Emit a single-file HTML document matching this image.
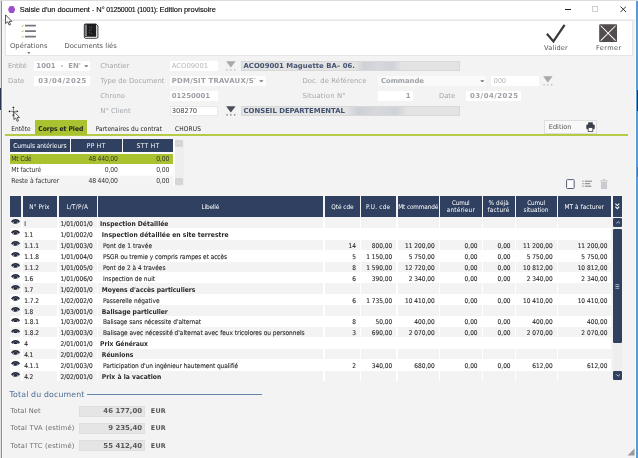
<!DOCTYPE html>
<html><head><meta charset="utf-8"><title>Saisie d'un document</title>
<style>
html,body{margin:0;padding:0;}
body{width:638px;height:458px;overflow:hidden;position:relative;background:#f3f3f3;font-family:"DejaVu Sans","Liberation Sans",sans-serif;font-size:7px;color:#333;}
.a{position:absolute;white-space:nowrap;line-height:1;}
.x{position:absolute;white-space:nowrap;line-height:12px;height:12px;}
.ti{font-family:"Liberation Sans",sans-serif;font-size:7.5px;color:#0a0a0a;-webkit-text-stroke:0.12px #0a0a0a;}
.tb{font-size:6.8px;color:#555;}
.lbl{color:#a3a7ab;font-size:6.85px;}
.fb{font-size:6.9px;font-weight:bold;color:#9da1a6;}
.fn{font-size:6.8px;color:#b5b8bb;}
.fg{font-size:6.9px;font-weight:bold;color:#43536f;}
.tab{font-family:"DejaVu Sans Condensed","Liberation Sans",sans-serif;font-size:6.5px;color:#1c1c1c;}
.h{font-family:"DejaVu Sans Condensed","Liberation Sans",sans-serif;font-size:6.4px;color:#fff;}
.c{font-family:"DejaVu Sans Condensed","Liberation Sans",sans-serif;font-size:6.5px;color:#282828;-webkit-text-stroke:0.1px #282828;}
.cb{font-family:"DejaVu Sans Condensed","Liberation Sans",sans-serif;font-size:6.7px;font-weight:bold;color:#2a2a2a;}
.s{font-family:"DejaVu Sans Condensed","Liberation Sans",sans-serif;font-size:6.8px;color:#333;}
.tt{font-size:7.8px;color:#4a6a94;}
.tl{font-size:6.7px;color:#6a6a6a;}
.tv{font-size:6.9px;font-weight:bold;color:#5a5a5a;}
.box{position:absolute;box-sizing:border-box;}
.hd{position:absolute;background:#2f4060;}
</style></head><body><div id="w" style="position:absolute;left:0;top:0;width:638px;height:458px;will-change:transform">

<div class="a" style="left:0;top:0;width:638px;height:1px;background:#dcdcdc"></div>
<div class="a" style="left:2px;top:1px;width:634px;height:19px;background:#fff"></div>
<div class="a" style="left:0px;top:1px;width:1px;height:457px;background:#e2e2e2"></div>
<div class="a" style="left:2px;top:20px;width:1px;height:438px;background:#fafafa"></div>
<div class="a" style="left:635px;top:20px;width:1px;height:438px;background:#fbfbfb"></div>
<div class="a" style="left:1px;top:1px;width:1px;height:457px;background:#5b9bd5"></div>
<div class="a" style="left:636.3px;top:1px;width:1.7px;height:457px;background:#5b9bd5"></div>
<svg class="a" style="left:7.9px;top:5.6px" width="7.3" height="7.2" viewBox="0 0 6.4 7" preserveAspectRatio="none"><polygon points="1.7,0.3 4.7,0.3 6.2,3.5 4.7,6.7 1.7,6.7 0.2,3.5" fill="#9b4fc4" stroke="#9b4fc4" stroke-width="0.5" stroke-linejoin="round"/></svg>
<span id="t1" class="x ti" style="left:19.8px;top:3.60px;letter-spacing:-0.071px;">Saisie d'un document - N° </span>
<span id="t2" class="x ti" style="left:106.3px;top:3.60px;letter-spacing:-0.249px;font-size:7px">01250001 (1001): </span>
<span id="t3" class="x ti" style="left:159.6px;top:3.60px;letter-spacing:-0.074px;">Edition provisoire</span>
<div class="a" style="left:564.5px;top:9px;width:6.2px;height:1px;background:#222"></div>
<div class="a" style="left:591.9px;top:6.2px;width:6px;height:6px;border:0.8px solid #cfcfcf;box-sizing:border-box"></div>
<svg class="a" style="left:619.5px;top:6px" width="6.6" height="6.6" viewBox="0 0 7 7"><path d="M0.5,0.5L6.5,6.5M6.5,0.5L0.5,6.5" stroke="#222" stroke-width="1"/></svg>
<div class="a" style="left:2px;top:19.4px;width:634px;height:2px;background:#f3f3f3"></div>
<div class="box" style="left:5px;top:19.6px;width:627.6px;height:36px;background:#fff;border:1px solid #e6e6e6"></div>
<svg class="a" style="left:21.4px;top:24.1px" width="17" height="15" viewBox="0 0 17 15"><g stroke="#74787e" stroke-width="1.8"><path d="M4,1.6H14.9M4,7.1H14.9M4,12.6H14.9"/></g><g stroke="#9ab92e" stroke-width="0.8" fill="none"><path d="M0.6,1.8L1.3,2.5L2.6,0.9M0.6,7.3L1.3,8L2.6,6.4M0.6,12.8L1.3,13.5L2.6,11.9"/></g></svg>
<span id="t4" class="x tb" style="left:10px;top:39.70px;letter-spacing:0.013px;">Opérations</span>
<svg class="a" style="left:26.9px;top:52px" width="3.8" height="2.1" viewBox="0 0 5 3"><path d="M0.5,0.3L4.5,0.3L2.5,2.7Z" fill="#444"/></svg>
<svg class="a" style="left:83px;top:23px" width="16" height="16" viewBox="83 23 16 16"><path d="M85.5,24.2H96.2L97.9,26V37Q97.9,38.3 96.6,38.3H85.8Q84.3,38.3 84.3,36.8V25.4Q84.3,24.2 85.5,24.2Z" fill="#fff" stroke="#2a2a2a" stroke-width="0.9"/><path d="M85.3,23.8H96.2V36.7H85.3Q84,36.7 84,35.4V25.1Q84,23.8 85.3,23.8Z" fill="#1d1d1f"/><rect x="84.6" y="24.6" width="2.3" height="11.4" fill="#8c8c90"/><path d="M84.6,26.2H86.9M84.6,28.2H86.9M84.6,30.2H86.9M84.6,32.2H86.9M84.6,34.2H86.9" stroke="#5a5a60" stroke-width="0.5"/><g fill="#8a8f9c"><rect x="89.3" y="26.8" width="0.8" height="0.8"/><rect x="91.3" y="26.8" width="0.8" height="0.8"/><rect x="90.6" y="28.9" width="0.8" height="0.8"/><rect x="89.3" y="30.3" width="0.8" height="0.8"/><rect x="89.3" y="32.2" width="0.8" height="0.8"/><rect x="90.9" y="33" width="0.8" height="0.8"/></g></svg>
<span id="t5" class="x tb" style="left:64.5px;top:39.70px;letter-spacing:-0.016px;">Documents liés</span>
<svg class="a" style="left:545px;top:22px" width="22" height="23" viewBox="545 22 22 23"><path d="M546.9,33.7L553.4,41.4L564.6,24.8" stroke="#3a3838" stroke-width="2.2" fill="none"/></svg>
<span id="t6" class="x tb" style="left:544px;top:41.50px;letter-spacing:0.192px;font-size:6.6px">Valider</span>
<svg class="a" style="left:599.1px;top:24.1px" width="18.3" height="18.3" viewBox="0 0 19 19"><rect x="0.2" y="0.2" width="18.6" height="18.6" rx="1.3" fill="#524c4c"/><path d="M1.8,1.8L17.2,17.2M17.2,1.8L1.8,17.2" stroke="#fff" stroke-width="1.05"/></svg>
<span id="t7" class="x tb" style="left:596px;top:41.50px;letter-spacing:0.370px;font-size:6.6px">Fermer</span>
<span id="t8" class="x lbl" style="left:8px;top:59.50px;letter-spacing:-0.307px;">Entité</span>
<div class="box" style="left:33.7px;top:60.5px;width:56.5px;height:10px;background:#fff;"></div>
<span id="t9" class="x fb" style="left:36.3px;top:59.50px;letter-spacing:0.040px;">1001&nbsp; -&nbsp; EN'</span>
<svg class="a" style="left:83.7px;top:64.5px" width="4.6" height="2.8" viewBox="0 0 4.6 2.8"><path d="M0.2,0.2L4.4,0.2L2.3,2.6Z" fill="#70747a"/></svg>
<span id="t10" class="x lbl" style="left:100.3px;top:59.50px;letter-spacing:-0.033px;">Chantier</span>
<div class="box" style="left:169.5px;top:60.5px;width:48.7px;height:10px;background:#fff;"></div>
<span id="t11" class="x fn" style="left:171.8px;top:59.50px;letter-spacing:0.006px;">ACO09001</span>
<svg class="a" style="left:225.6px;top:60.8px" width="10" height="10" viewBox="0 0 10 10"><path d="M0.1,0.2H9.6L4.85,6.5Z" fill="#a6a8ab"/><path d="M0.5,8.9H1.6M4.3,8.9H5.4M8.2,8.9H9.3" stroke="#a6a8ab" stroke-width="1.1"/></svg>
<div class="box" style="left:241px;top:60.5px;width:219px;height:10px;background:#e3e3e3;border:1px solid #d8d8d8;"></div>
<span id="t12" class="x fg" style="left:243.5px;top:59.50px;letter-spacing:0.022px;">ACO09001 Maguette BA– 06.</span>
<span id="t13" class="x lbl" style="left:8px;top:74.70px;letter-spacing:-0.015px;">Date</span>
<div class="box" style="left:33.7px;top:75.7px;width:56.5px;height:10px;background:#fff;"></div>
<span id="t14" class="x fb" style="left:38.3px;top:74.70px;letter-spacing:0.511px;">03/04/2025</span>
<span id="t15" class="x lbl" style="left:100.3px;top:74.70px;letter-spacing:0.007px;">Type de Document</span>
<div class="box" style="left:169.5px;top:75.7px;width:96px;height:10px;background:#fcfcfc;"></div>
<span id="t16" class="x fb" style="left:171.8px;top:74.70px;letter-spacing:0.242px;">PDM/SIT TRAVAUX/S&#8242;</span>
<svg class="a" style="left:259px;top:79.7px" width="4.6" height="2.8" viewBox="0 0 4.6 2.8"><path d="M0.2,0.2L4.4,0.2L2.3,2.6Z" fill="#70747a"/></svg>
<span id="t17" class="x lbl" style="left:302.4px;top:74.70px;letter-spacing:0.078px;">Doc. de Référence</span>
<div class="box" style="left:378.2px;top:75.7px;width:107.8px;height:10px;background:#fafafa;"></div>
<span id="t18" class="x fb" style="left:381px;top:74.70px;letter-spacing:-0.039px;">Commande</span>
<svg class="a" style="left:479.5px;top:79.7px" width="4.6" height="2.8" viewBox="0 0 4.6 2.8"><path d="M0.2,0.2L4.4,0.2L2.3,2.6Z" fill="#70747a"/></svg>
<div class="box" style="left:490.5px;top:75.7px;width:48.5px;height:10px;background:#fff;"></div>
<span id="t19" class="x fn" style="left:493.5px;top:74.70px;letter-spacing:-0.161px;">000</span>
<svg class="a" style="left:543.2px;top:75.5px" width="10" height="10" viewBox="0 0 10 10"><path d="M0.1,0.2H9.6L4.85,6.5Z" fill="#a6a8ab"/><path d="M0.5,8.9H1.6M4.3,8.9H5.4M8.2,8.9H9.3" stroke="#a6a8ab" stroke-width="1.1"/></svg>
<span id="t20" class="x lbl" style="left:100.3px;top:89.80px;letter-spacing:0.033px;">Chrono</span>
<div class="box" style="left:169.5px;top:90.8px;width:48.7px;height:10px;background:#fff;"></div>
<span id="t21" class="x fb" style="left:171.8px;top:89.80px;letter-spacing:-0.007px;">01250001</span>
<span id="t22" class="x lbl" style="left:302.4px;top:89.80px;letter-spacing:0.192px;">Situation N°</span>
<div class="box" style="left:378.2px;top:90.8px;width:35.2px;height:10px;background:#fff;"></div>
<span id="t23" class="x fb" style="right:227.80px;top:89.80px;letter-spacing:-0.297px;">1</span>
<span id="t24" class="x lbl" style="left:439px;top:89.80px;letter-spacing:-0.090px;">Date</span>
<div class="box" style="left:466px;top:90.8px;width:55.2px;height:10px;background:#fff;"></div>
<span id="t25" class="x fb" style="left:470px;top:89.80px;letter-spacing:0.511px;">03/04/2025</span>
<span id="t26" class="x lbl" style="left:100.3px;top:104.70px;letter-spacing:-0.026px;">N° Client</span>
<div class="box" style="left:169.5px;top:105.7px;width:48.7px;height:10px;background:#fff;border:1px solid #e9e9e9;"></div>
<span id="t27" class="x fn" style="left:171.8px;top:104.70px;letter-spacing:-0.109px;color:#4a4a4a">308270</span>
<svg class="a" style="left:225.7px;top:106.2px" width="10" height="10" viewBox="0 0 10 10"><path d="M0.1,0.2H9.6L4.85,6.5Z" fill="#4a4e58"/><path d="M0.5,8.9H1.6M4.3,8.9H5.4M8.2,8.9H9.3" stroke="#4a4e58" stroke-width="1.1"/></svg>
<div class="box" style="left:241px;top:105.7px;width:219px;height:10px;background:#e3e3e3;border:1px solid #d8d8d8;"></div>
<span id="t28" class="x fg" style="left:243.5px;top:104.70px;letter-spacing:-0.001px;">CONSEIL DEPARTEMENTAL</span>
<div class="a" style="left:356px;top:62px;width:45px;height:7.5px;background:linear-gradient(90deg,#e2e2e2,#cdd0d6 18%,#d6d8dc 50%,#cfd2d7 82%,#e2e2e2)"></div>
<div class="a" style="left:347px;top:107px;width:60px;height:7.5px;background:linear-gradient(90deg,#e2e2e2,#cdd0d6 18%,#d6d8dc 50%,#cfd2d7 82%,#e2e2e2)"></div>
<div class="a" style="left:5px;top:134.15px;width:623.3px;height:1.4px;background:#b5cb48"></div>
<div class="a" style="left:35px;top:120.4px;width:51.8px;height:14.3px;background:#a9c22f"></div>
<span id="t29" class="x tab" style="left:11.3px;top:122.90px;letter-spacing:0.035px;">Entête</span>
<span id="t30" class="x tab" style="left:38.3px;top:122.90px;letter-spacing:-0.040px;font-weight:bold;color:#222;font-size:6.7px">Corps et Pied</span>
<span id="t31" class="x tab" style="left:95.7px;top:122.90px;letter-spacing:0.053px;">Partenaires du contrat</span>
<span id="t32" class="x tab" style="left:175px;top:122.90px;letter-spacing:0.141px;">CHORUS</span>
<div class="box" style="left:544px;top:120px;width:52.5px;height:13.5px;background:#f8f8f8;border:1px solid #dedede"></div>
<span id="t33" class="x tb" style="left:548.8px;top:121.20px;letter-spacing:-0.018px;font-size:6.6px">Edition</span>
<svg class="a" style="left:585.8px;top:122px" width="9" height="10" viewBox="0 0 9 10"><rect x="2.2" y="0.3" width="4.6" height="3" fill="#3a3f4a"/><rect x="0.3" y="2.6" width="8.4" height="4.6" rx="1" fill="#3a3f4a"/><rect x="2.2" y="5.6" width="4.6" height="3.8" fill="#fff" stroke="#3a3f4a" stroke-width="0.8"/></svg>
<div class="a" style="left:10px;top:139.2px;width:164.5px;height:47.3px;background:#fbfbfb"></div>
<div class="hd" style="left:10.3px;top:139.4px;width:59.40px;height:12.9px"></div>
<div class="hd" style="left:71.2px;top:139.4px;width:50.40px;height:12.9px"></div>
<div class="hd" style="left:123.2px;top:139.4px;width:50.00px;height:12.9px"></div>
<span id="t34" class="x h" style="left:13.2px;top:140.20px;letter-spacing:-0.069px;font-size:6.6px">Cumuls antérieurs</span>
<span id="t35" class="x h" style="left:86.7px;top:140.20px;letter-spacing:0.375px;font-size:6.6px">PP HT</span>
<span id="t36" class="x h" style="left:136.5px;top:140.20px;letter-spacing:0.354px;font-size:6.6px">STT HT</span>
<div class="a" style="left:174.5px;top:139.2px;width:9.4px;height:47.3px;background:#eeeeee"></div>
<div class="a" style="left:175.3px;top:139.8px;width:7.7px;height:7.7px;background:#d5d5d5;border-radius:1px"></div>
<div class="a" style="left:175.3px;top:177.6px;width:7.7px;height:7.7px;background:#d5d5d5;border-radius:1px"></div>
<svg class="a" style="left:177.4px;top:142.3px" width="3.6" height="2.4" viewBox="0 0 4.6 3"><path d="M0.4,2.5L2.3,0.7L4.2,2.5" stroke="#e8e8e8" stroke-width="0.9" fill="none"/></svg>
<svg class="a" style="left:177.4px;top:180.5px" width="3.6" height="2.4" viewBox="0 0 4.6 3"><path d="M0.4,0.5L2.3,2.3L4.2,0.5" stroke="#e8e8e8" stroke-width="0.9" fill="none"/></svg>
<div class="a" style="left:10.3px;top:153.7px;width:162.9px;height:10px;background:#a9c22f"></div>
<span id="t37" class="x s" style="left:11.3px;top:152.90px;letter-spacing:-0.258px;">Mt Cdé</span>
<span id="t38" class="x s" style="right:520.31px;top:152.90px;letter-spacing:-0.214px;">48 440,00</span>
<span id="t39" class="x s" style="right:468.86px;top:152.90px;letter-spacing:-0.156px;">0,00</span>
<div class="a" style="left:10.3px;top:164.7px;width:162.9px;height:10px;background:#fff"></div>
<span id="t40" class="x s" style="left:11.3px;top:163.90px;letter-spacing:-0.158px;">Mt facturé</span>
<span id="t41" class="x s" style="right:520.26px;top:163.90px;letter-spacing:-0.156px;">0,00</span>
<span id="t42" class="x s" style="right:468.86px;top:163.90px;letter-spacing:-0.156px;">0,00</span>
<div class="a" style="left:10.3px;top:175.7px;width:162.9px;height:10px;background:#f4f4f4"></div>
<span id="t43" class="x s" style="left:11.3px;top:174.90px;letter-spacing:-0.060px;">Reste à facturer</span>
<span id="t44" class="x s" style="right:520.31px;top:174.90px;letter-spacing:-0.214px;">48 440,00</span>
<span id="t45" class="x s" style="right:468.86px;top:174.90px;letter-spacing:-0.156px;">0,00</span>
<svg class="a" style="left:566.2px;top:178.7px" width="8.8" height="10.1" viewBox="0 0 8.8 10.1"><rect x="0.6" y="0.6" width="7.6" height="8.9" rx="0.8" fill="#fdfdfd" stroke="#555b72" stroke-width="1"/></svg>
<svg class="a" style="left:581.8px;top:180.3px" width="10.5" height="7.5" viewBox="0 0 10.5 7.5"><path d="M0.3,1.2H1.6M2.8,1.2H10.2M0.3,3.7H1.6M2.8,3.7H8.2M0.3,6.2H1.6M2.8,6.2H9.4" stroke="#7a8088" stroke-width="1"/></svg>
<svg class="a" style="left:599.7px;top:178.7px" width="8" height="10.4" viewBox="0 0 8 10.4"><path d="M0.2,1.9H7.8M2.8,0.7H5.2" stroke="#c2c2c8" stroke-width="1"/><path d="M1,3.1H7V9.6Q7,10.1 6.5,10.1H1.5Q1,10.1 1,9.6Z" fill="#c6c6cc"/><path d="M2.9,3.6V9.6M5.1,3.6V9.6" stroke="#dcdce0" stroke-width="0.6"/></svg>
<div class="hd" style="left:10px;top:195.6px;width:11.00px;height:21.3px"></div>
<div class="hd" style="left:22.5px;top:195.6px;width:34.90px;height:21.3px"></div>
<div class="hd" style="left:58.9px;top:195.6px;width:37.80px;height:21.3px"></div>
<div class="hd" style="left:98.2px;top:195.6px;width:225.00px;height:21.3px"></div>
<div class="hd" style="left:324.8px;top:195.6px;width:35.10px;height:21.3px"></div>
<div class="hd" style="left:361.4px;top:195.6px;width:34.80px;height:21.3px"></div>
<div class="hd" style="left:397.7px;top:195.6px;width:41.10px;height:21.3px"></div>
<div class="hd" style="left:440.3px;top:195.6px;width:41.30px;height:21.3px"></div>
<div class="hd" style="left:483.3px;top:195.6px;width:31.30px;height:21.3px"></div>
<div class="hd" style="left:516.1px;top:195.6px;width:40.60px;height:21.3px"></div>
<div class="hd" style="left:558.2px;top:195.6px;width:53.20px;height:21.3px"></div>
<div class="hd" style="left:613.3px;top:195.6px;width:8.70px;height:21.3px"></div>
<span id="t46" class="x h" style="left:29.3px;top:200.80px;letter-spacing:0.083px;">N° Prix</span>
<span id="t47" class="x h" style="left:66.4px;top:200.80px;letter-spacing:0.266px;">L/T/P/A</span>
<span id="t48" class="x h" style="left:201.4px;top:200.80px;letter-spacing:-0.133px;">Libellé</span>
<span id="t49" class="x h" style="left:331.2px;top:200.80px;letter-spacing:-0.014px;">Qté cde</span>
<span id="t50" class="x h" style="left:366px;top:200.80px;letter-spacing:0.223px;">P.U. cde</span>
<span id="t51" class="x h" style="left:398.2px;top:200.80px;letter-spacing:-0.107px;">Mt commandé</span>
<span id="t52" class="x h" style="left:452px;top:197.00px;letter-spacing:-0.203px;">Cumul</span>
<span id="t53" class="x h" style="left:446.8px;top:204.40px;letter-spacing:0.192px;">antérieur</span>
<span id="t54" class="x h" style="left:488.5px;top:197.00px;letter-spacing:0.148px;">% déjà</span>
<span id="t55" class="x h" style="left:487.5px;top:204.40px;letter-spacing:0.232px;">facturé</span>
<span id="t56" class="x h" style="left:527.2px;top:197.00px;letter-spacing:-0.143px;">Cumul</span>
<span id="t57" class="x h" style="left:523.5px;top:204.40px;letter-spacing:-0.003px;">situation</span>
<span id="t58" class="x h" style="left:564.5px;top:200.80px;letter-spacing:0.087px;">MT à facturer</span>
<svg class="a" style="left:615.3px;top:203px" width="4.6" height="6.9" viewBox="0 0 5.4 8"><path d="M0.4,0.6L2.7,3L5,0.6M0.4,4.2L2.7,6.6L5,4.2" stroke="#fff" stroke-width="1.2" fill="none"/></svg>
<div class="a" style="left:10px;top:217.5px;width:601.4px;height:163.45px;background:#fff"></div>
<div class="a" style="left:10.2px;top:217.80px;width:11.00px;height:10.33px;background:#f3f3f3"></div>
<div class="a" style="left:22.5px;top:217.80px;width:34.90px;height:10.33px;background:#f3f3f3"></div>
<div class="a" style="left:58.9px;top:217.80px;width:37.80px;height:10.33px;background:#f3f3f3"></div>
<div class="a" style="left:98.2px;top:217.80px;width:225.00px;height:10.33px;background:#f3f3f3"></div>
<div class="a" style="left:324.8px;top:217.80px;width:35.10px;height:10.33px;background:#f3f3f3"></div>
<div class="a" style="left:361.4px;top:217.80px;width:34.80px;height:10.33px;background:#f3f3f3"></div>
<div class="a" style="left:397.7px;top:217.80px;width:41.10px;height:10.33px;background:#f3f3f3"></div>
<div class="a" style="left:440.3px;top:217.80px;width:41.30px;height:10.33px;background:#f3f3f3"></div>
<div class="a" style="left:483.3px;top:217.80px;width:31.30px;height:10.33px;background:#f3f3f3"></div>
<div class="a" style="left:516.1px;top:217.80px;width:40.60px;height:10.33px;background:#f3f3f3"></div>
<div class="a" style="left:558.2px;top:217.80px;width:53.20px;height:10.33px;background:#f3f3f3"></div>
<svg class="a" style="left:11.1px;top:219.30px" width="9.1" height="4.8" viewBox="0 0 9 4.8"><path d="M0,2.5C1.3,0.7 2.9,0 4.5,0C6.1,0 7.7,0.7 9,2.5C7.7,4.1 6.1,4.8 4.5,4.8C2.9,4.8 1.3,4.1 0,2.5Z" fill="#232833"/><path d="M1.3,2.9C1.7,3.5 2.3,3.9 3,4.1C2.6,3.6 2.5,3 2.6,2.4ZM7.7,2.9C7.3,3.5 6.7,3.9 6,4.1C6.4,3.6 6.5,3 6.4,2.4Z" fill="#e8e8ec"/><path d="M3.4,2.2C3.9,1.5 5.1,1.5 5.6,2.2" stroke="#5a8ed0" stroke-width="0.7" fill="none"/></svg>
<span id="t59" class="x c" style="left:24.3px;top:218.10px;letter-spacing:-0.234px;">I</span>
<span id="t60" class="x c" style="left:60.6px;top:218.10px;letter-spacing:0.015px;">1/01/001/0</span>
<span id="t61" class="x cb" style="left:100px;top:218.10px;letter-spacing:0.031px;">Inspection Détaillée</span>
<svg class="a" style="left:11.1px;top:230.23px" width="9.1" height="4.8" viewBox="0 0 9 4.8"><path d="M0,2.5C1.3,0.7 2.9,0 4.5,0C6.1,0 7.7,0.7 9,2.5C7.7,4.1 6.1,4.8 4.5,4.8C2.9,4.8 1.3,4.1 0,2.5Z" fill="#232833"/><path d="M1.3,2.9C1.7,3.5 2.3,3.9 3,4.1C2.6,3.6 2.5,3 2.6,2.4ZM7.7,2.9C7.3,3.5 6.7,3.9 6,4.1C6.4,3.6 6.5,3 6.4,2.4Z" fill="#e8e8ec"/><path d="M3.4,2.2C3.9,1.5 5.1,1.5 5.6,2.2" stroke="#5a8ed0" stroke-width="0.7" fill="none"/></svg>
<span id="t62" class="x c" style="left:24.3px;top:229.03px;letter-spacing:-0.199px;">1.1</span>
<span id="t63" class="x c" style="left:60.6px;top:229.03px;letter-spacing:0.015px;">1/01/002/0</span>
<span id="t64" class="x cb" style="left:101.8px;top:229.03px;letter-spacing:0.052px;">Inspection détaillée en site terrestre</span>
<div class="a" style="left:10.2px;top:239.66px;width:11.00px;height:10.33px;background:#f3f3f3"></div>
<div class="a" style="left:22.5px;top:239.66px;width:34.90px;height:10.33px;background:#f3f3f3"></div>
<div class="a" style="left:58.9px;top:239.66px;width:37.80px;height:10.33px;background:#f3f3f3"></div>
<div class="a" style="left:98.2px;top:239.66px;width:225.00px;height:10.33px;background:#f3f3f3"></div>
<div class="a" style="left:324.8px;top:239.66px;width:35.10px;height:10.33px;background:#f3f3f3"></div>
<div class="a" style="left:361.4px;top:239.66px;width:34.80px;height:10.33px;background:#f3f3f3"></div>
<div class="a" style="left:397.7px;top:239.66px;width:41.10px;height:10.33px;background:#f3f3f3"></div>
<div class="a" style="left:440.3px;top:239.66px;width:41.30px;height:10.33px;background:#f3f3f3"></div>
<div class="a" style="left:483.3px;top:239.66px;width:31.30px;height:10.33px;background:#f3f3f3"></div>
<div class="a" style="left:516.1px;top:239.66px;width:40.60px;height:10.33px;background:#f3f3f3"></div>
<div class="a" style="left:558.2px;top:239.66px;width:53.20px;height:10.33px;background:#f3f3f3"></div>
<svg class="a" style="left:11.1px;top:241.16px" width="9.1" height="4.8" viewBox="0 0 9 4.8"><path d="M0,2.5C1.3,0.7 2.9,0 4.5,0C6.1,0 7.7,0.7 9,2.5C7.7,4.1 6.1,4.8 4.5,4.8C2.9,4.8 1.3,4.1 0,2.5Z" fill="#232833"/><path d="M1.3,2.9C1.7,3.5 2.3,3.9 3,4.1C2.6,3.6 2.5,3 2.6,2.4ZM7.7,2.9C7.3,3.5 6.7,3.9 6,4.1C6.4,3.6 6.5,3 6.4,2.4Z" fill="#e8e8ec"/><path d="M3.4,2.2C3.9,1.5 5.1,1.5 5.6,2.2" stroke="#5a8ed0" stroke-width="0.7" fill="none"/></svg>
<span id="t65" class="x c" style="left:24.3px;top:239.96px;letter-spacing:-0.035px;">1.1.1</span>
<span id="t66" class="x c" style="left:60.6px;top:239.96px;letter-spacing:0.015px;">1/01/003/0</span>
<span id="t67" class="x c" style="left:103px;top:239.96px;letter-spacing:0.042px;">Pont de 1 travée</span>
<span id="t68" class="x c" style="right:282.10px;top:239.96px;letter-spacing:0.000px;">14</span>
<span id="t69" class="x c" style="right:245.80px;top:239.96px;letter-spacing:0.000px;">800,00</span>
<span id="t70" class="x c" style="right:203.20px;top:239.96px;letter-spacing:0.000px;">11 200,00</span>
<span id="t71" class="x c" style="right:160.40px;top:239.96px;letter-spacing:0.000px;">0,00</span>
<span id="t72" class="x c" style="right:127.40px;top:239.96px;letter-spacing:0.000px;">0,00</span>
<span id="t73" class="x c" style="right:85.30px;top:239.96px;letter-spacing:0.000px;">11 200,00</span>
<span id="t74" class="x c" style="right:30.60px;top:239.96px;letter-spacing:0.000px;">11 200,00</span>
<svg class="a" style="left:11.1px;top:252.09px" width="9.1" height="4.8" viewBox="0 0 9 4.8"><path d="M0,2.5C1.3,0.7 2.9,0 4.5,0C6.1,0 7.7,0.7 9,2.5C7.7,4.1 6.1,4.8 4.5,4.8C2.9,4.8 1.3,4.1 0,2.5Z" fill="#232833"/><path d="M1.3,2.9C1.7,3.5 2.3,3.9 3,4.1C2.6,3.6 2.5,3 2.6,2.4ZM7.7,2.9C7.3,3.5 6.7,3.9 6,4.1C6.4,3.6 6.5,3 6.4,2.4Z" fill="#e8e8ec"/><path d="M3.4,2.2C3.9,1.5 5.1,1.5 5.6,2.2" stroke="#5a8ed0" stroke-width="0.7" fill="none"/></svg>
<span id="t75" class="x c" style="left:24.3px;top:250.89px;letter-spacing:-0.035px;">1.1.8</span>
<span id="t76" class="x c" style="left:60.6px;top:250.89px;letter-spacing:0.015px;">1/01/004/0</span>
<span id="t77" class="x c" style="left:103px;top:250.89px;letter-spacing:-0.063px;">PSGR ou tremie y compris rampes et accès</span>
<span id="t78" class="x c" style="right:282.10px;top:250.89px;letter-spacing:0.000px;">5</span>
<span id="t79" class="x c" style="right:245.80px;top:250.89px;letter-spacing:0.000px;">1 150,00</span>
<span id="t80" class="x c" style="right:203.20px;top:250.89px;letter-spacing:0.000px;">5 750,00</span>
<span id="t81" class="x c" style="right:160.40px;top:250.89px;letter-spacing:0.000px;">0,00</span>
<span id="t82" class="x c" style="right:127.40px;top:250.89px;letter-spacing:0.000px;">0,00</span>
<span id="t83" class="x c" style="right:85.30px;top:250.89px;letter-spacing:0.000px;">5 750,00</span>
<span id="t84" class="x c" style="right:30.60px;top:250.89px;letter-spacing:0.000px;">5 750,00</span>
<div class="a" style="left:10.2px;top:261.52px;width:11.00px;height:10.33px;background:#f3f3f3"></div>
<div class="a" style="left:22.5px;top:261.52px;width:34.90px;height:10.33px;background:#f3f3f3"></div>
<div class="a" style="left:58.9px;top:261.52px;width:37.80px;height:10.33px;background:#f3f3f3"></div>
<div class="a" style="left:98.2px;top:261.52px;width:225.00px;height:10.33px;background:#f3f3f3"></div>
<div class="a" style="left:324.8px;top:261.52px;width:35.10px;height:10.33px;background:#f3f3f3"></div>
<div class="a" style="left:361.4px;top:261.52px;width:34.80px;height:10.33px;background:#f3f3f3"></div>
<div class="a" style="left:397.7px;top:261.52px;width:41.10px;height:10.33px;background:#f3f3f3"></div>
<div class="a" style="left:440.3px;top:261.52px;width:41.30px;height:10.33px;background:#f3f3f3"></div>
<div class="a" style="left:483.3px;top:261.52px;width:31.30px;height:10.33px;background:#f3f3f3"></div>
<div class="a" style="left:516.1px;top:261.52px;width:40.60px;height:10.33px;background:#f3f3f3"></div>
<div class="a" style="left:558.2px;top:261.52px;width:53.20px;height:10.33px;background:#f3f3f3"></div>
<svg class="a" style="left:11.1px;top:263.02px" width="9.1" height="4.8" viewBox="0 0 9 4.8"><path d="M0,2.5C1.3,0.7 2.9,0 4.5,0C6.1,0 7.7,0.7 9,2.5C7.7,4.1 6.1,4.8 4.5,4.8C2.9,4.8 1.3,4.1 0,2.5Z" fill="#232833"/><path d="M1.3,2.9C1.7,3.5 2.3,3.9 3,4.1C2.6,3.6 2.5,3 2.6,2.4ZM7.7,2.9C7.3,3.5 6.7,3.9 6,4.1C6.4,3.6 6.5,3 6.4,2.4Z" fill="#e8e8ec"/><path d="M3.4,2.2C3.9,1.5 5.1,1.5 5.6,2.2" stroke="#5a8ed0" stroke-width="0.7" fill="none"/></svg>
<span id="t85" class="x c" style="left:24.3px;top:261.82px;letter-spacing:-0.035px;">1.1.2</span>
<span id="t86" class="x c" style="left:60.6px;top:261.82px;letter-spacing:0.015px;">1/01/005/0</span>
<span id="t87" class="x c" style="left:103px;top:261.82px;letter-spacing:0.001px;">Pont de 2 à 4 travées</span>
<span id="t88" class="x c" style="right:282.10px;top:261.82px;letter-spacing:0.000px;">8</span>
<span id="t89" class="x c" style="right:245.80px;top:261.82px;letter-spacing:0.000px;">1 590,00</span>
<span id="t90" class="x c" style="right:203.20px;top:261.82px;letter-spacing:0.000px;">12 720,00</span>
<span id="t91" class="x c" style="right:160.40px;top:261.82px;letter-spacing:0.000px;">0,00</span>
<span id="t92" class="x c" style="right:127.40px;top:261.82px;letter-spacing:0.000px;">0,00</span>
<span id="t93" class="x c" style="right:85.30px;top:261.82px;letter-spacing:0.000px;">10 812,00</span>
<span id="t94" class="x c" style="right:30.60px;top:261.82px;letter-spacing:0.000px;">10 812,00</span>
<svg class="a" style="left:11.1px;top:273.95px" width="9.1" height="4.8" viewBox="0 0 9 4.8"><path d="M0,2.5C1.3,0.7 2.9,0 4.5,0C6.1,0 7.7,0.7 9,2.5C7.7,4.1 6.1,4.8 4.5,4.8C2.9,4.8 1.3,4.1 0,2.5Z" fill="#232833"/><path d="M1.3,2.9C1.7,3.5 2.3,3.9 3,4.1C2.6,3.6 2.5,3 2.6,2.4ZM7.7,2.9C7.3,3.5 6.7,3.9 6,4.1C6.4,3.6 6.5,3 6.4,2.4Z" fill="#e8e8ec"/><path d="M3.4,2.2C3.9,1.5 5.1,1.5 5.6,2.2" stroke="#5a8ed0" stroke-width="0.7" fill="none"/></svg>
<span id="t95" class="x c" style="left:24.3px;top:272.75px;letter-spacing:-0.199px;">1.6</span>
<span id="t96" class="x c" style="left:60.6px;top:272.75px;letter-spacing:0.015px;">1/01/006/0</span>
<span id="t97" class="x c" style="left:103px;top:272.75px;letter-spacing:-0.031px;">Inspection de nuit</span>
<span id="t98" class="x c" style="right:282.10px;top:272.75px;letter-spacing:0.000px;">6</span>
<span id="t99" class="x c" style="right:245.80px;top:272.75px;letter-spacing:0.000px;">390,00</span>
<span id="t100" class="x c" style="right:203.20px;top:272.75px;letter-spacing:0.000px;">2 340,00</span>
<span id="t101" class="x c" style="right:160.40px;top:272.75px;letter-spacing:0.000px;">0,00</span>
<span id="t102" class="x c" style="right:127.40px;top:272.75px;letter-spacing:0.000px;">0,00</span>
<span id="t103" class="x c" style="right:85.30px;top:272.75px;letter-spacing:0.000px;">2 340,00</span>
<span id="t104" class="x c" style="right:30.60px;top:272.75px;letter-spacing:0.000px;">2 340,00</span>
<div class="a" style="left:10.2px;top:283.38px;width:11.00px;height:10.33px;background:#f3f3f3"></div>
<div class="a" style="left:22.5px;top:283.38px;width:34.90px;height:10.33px;background:#f3f3f3"></div>
<div class="a" style="left:58.9px;top:283.38px;width:37.80px;height:10.33px;background:#f3f3f3"></div>
<div class="a" style="left:98.2px;top:283.38px;width:225.00px;height:10.33px;background:#f3f3f3"></div>
<div class="a" style="left:324.8px;top:283.38px;width:35.10px;height:10.33px;background:#f3f3f3"></div>
<div class="a" style="left:361.4px;top:283.38px;width:34.80px;height:10.33px;background:#f3f3f3"></div>
<div class="a" style="left:397.7px;top:283.38px;width:41.10px;height:10.33px;background:#f3f3f3"></div>
<div class="a" style="left:440.3px;top:283.38px;width:41.30px;height:10.33px;background:#f3f3f3"></div>
<div class="a" style="left:483.3px;top:283.38px;width:31.30px;height:10.33px;background:#f3f3f3"></div>
<div class="a" style="left:516.1px;top:283.38px;width:40.60px;height:10.33px;background:#f3f3f3"></div>
<div class="a" style="left:558.2px;top:283.38px;width:53.20px;height:10.33px;background:#f3f3f3"></div>
<svg class="a" style="left:11.1px;top:284.88px" width="9.1" height="4.8" viewBox="0 0 9 4.8"><path d="M0,2.5C1.3,0.7 2.9,0 4.5,0C6.1,0 7.7,0.7 9,2.5C7.7,4.1 6.1,4.8 4.5,4.8C2.9,4.8 1.3,4.1 0,2.5Z" fill="#232833"/><path d="M1.3,2.9C1.7,3.5 2.3,3.9 3,4.1C2.6,3.6 2.5,3 2.6,2.4ZM7.7,2.9C7.3,3.5 6.7,3.9 6,4.1C6.4,3.6 6.5,3 6.4,2.4Z" fill="#e8e8ec"/><path d="M3.4,2.2C3.9,1.5 5.1,1.5 5.6,2.2" stroke="#5a8ed0" stroke-width="0.7" fill="none"/></svg>
<span id="t105" class="x c" style="left:24.3px;top:283.68px;letter-spacing:-0.199px;">1.7</span>
<span id="t106" class="x c" style="left:60.6px;top:283.68px;letter-spacing:0.015px;">1/02/001/0</span>
<span id="t107" class="x cb" style="left:101.8px;top:283.68px;letter-spacing:-0.021px;">Moyens d'accès particuliers</span>
<svg class="a" style="left:11.1px;top:295.81px" width="9.1" height="4.8" viewBox="0 0 9 4.8"><path d="M0,2.5C1.3,0.7 2.9,0 4.5,0C6.1,0 7.7,0.7 9,2.5C7.7,4.1 6.1,4.8 4.5,4.8C2.9,4.8 1.3,4.1 0,2.5Z" fill="#232833"/><path d="M1.3,2.9C1.7,3.5 2.3,3.9 3,4.1C2.6,3.6 2.5,3 2.6,2.4ZM7.7,2.9C7.3,3.5 6.7,3.9 6,4.1C6.4,3.6 6.5,3 6.4,2.4Z" fill="#e8e8ec"/><path d="M3.4,2.2C3.9,1.5 5.1,1.5 5.6,2.2" stroke="#5a8ed0" stroke-width="0.7" fill="none"/></svg>
<span id="t108" class="x c" style="left:24.3px;top:294.61px;letter-spacing:-0.035px;">1.7.2</span>
<span id="t109" class="x c" style="left:60.6px;top:294.61px;letter-spacing:0.015px;">1/02/002/0</span>
<span id="t110" class="x c" style="left:103px;top:294.61px;letter-spacing:-0.008px;">Passerelle négative</span>
<span id="t111" class="x c" style="right:282.10px;top:294.61px;letter-spacing:0.000px;">6</span>
<span id="t112" class="x c" style="right:245.80px;top:294.61px;letter-spacing:0.000px;">1 735,00</span>
<span id="t113" class="x c" style="right:203.20px;top:294.61px;letter-spacing:0.000px;">10 410,00</span>
<span id="t114" class="x c" style="right:160.40px;top:294.61px;letter-spacing:0.000px;">0,00</span>
<span id="t115" class="x c" style="right:127.40px;top:294.61px;letter-spacing:0.000px;">0,00</span>
<span id="t116" class="x c" style="right:85.30px;top:294.61px;letter-spacing:0.000px;">10 410,00</span>
<span id="t117" class="x c" style="right:30.60px;top:294.61px;letter-spacing:0.000px;">10 410,00</span>
<div class="a" style="left:10.2px;top:305.24px;width:11.00px;height:10.33px;background:#f3f3f3"></div>
<div class="a" style="left:22.5px;top:305.24px;width:34.90px;height:10.33px;background:#f3f3f3"></div>
<div class="a" style="left:58.9px;top:305.24px;width:37.80px;height:10.33px;background:#f3f3f3"></div>
<div class="a" style="left:98.2px;top:305.24px;width:225.00px;height:10.33px;background:#f3f3f3"></div>
<div class="a" style="left:324.8px;top:305.24px;width:35.10px;height:10.33px;background:#f3f3f3"></div>
<div class="a" style="left:361.4px;top:305.24px;width:34.80px;height:10.33px;background:#f3f3f3"></div>
<div class="a" style="left:397.7px;top:305.24px;width:41.10px;height:10.33px;background:#f3f3f3"></div>
<div class="a" style="left:440.3px;top:305.24px;width:41.30px;height:10.33px;background:#f3f3f3"></div>
<div class="a" style="left:483.3px;top:305.24px;width:31.30px;height:10.33px;background:#f3f3f3"></div>
<div class="a" style="left:516.1px;top:305.24px;width:40.60px;height:10.33px;background:#f3f3f3"></div>
<div class="a" style="left:558.2px;top:305.24px;width:53.20px;height:10.33px;background:#f3f3f3"></div>
<svg class="a" style="left:11.1px;top:306.74px" width="9.1" height="4.8" viewBox="0 0 9 4.8"><path d="M0,2.5C1.3,0.7 2.9,0 4.5,0C6.1,0 7.7,0.7 9,2.5C7.7,4.1 6.1,4.8 4.5,4.8C2.9,4.8 1.3,4.1 0,2.5Z" fill="#232833"/><path d="M1.3,2.9C1.7,3.5 2.3,3.9 3,4.1C2.6,3.6 2.5,3 2.6,2.4ZM7.7,2.9C7.3,3.5 6.7,3.9 6,4.1C6.4,3.6 6.5,3 6.4,2.4Z" fill="#e8e8ec"/><path d="M3.4,2.2C3.9,1.5 5.1,1.5 5.6,2.2" stroke="#5a8ed0" stroke-width="0.7" fill="none"/></svg>
<span id="t118" class="x c" style="left:24.3px;top:305.54px;letter-spacing:-0.199px;">1.8</span>
<span id="t119" class="x c" style="left:60.6px;top:305.54px;letter-spacing:0.015px;">1/03/001/0</span>
<span id="t120" class="x cb" style="left:101.8px;top:305.54px;letter-spacing:-0.009px;">Balisage particulier</span>
<svg class="a" style="left:11.1px;top:317.67px" width="9.1" height="4.8" viewBox="0 0 9 4.8"><path d="M0,2.5C1.3,0.7 2.9,0 4.5,0C6.1,0 7.7,0.7 9,2.5C7.7,4.1 6.1,4.8 4.5,4.8C2.9,4.8 1.3,4.1 0,2.5Z" fill="#232833"/><path d="M1.3,2.9C1.7,3.5 2.3,3.9 3,4.1C2.6,3.6 2.5,3 2.6,2.4ZM7.7,2.9C7.3,3.5 6.7,3.9 6,4.1C6.4,3.6 6.5,3 6.4,2.4Z" fill="#e8e8ec"/><path d="M3.4,2.2C3.9,1.5 5.1,1.5 5.6,2.2" stroke="#5a8ed0" stroke-width="0.7" fill="none"/></svg>
<span id="t121" class="x c" style="left:24.3px;top:316.47px;letter-spacing:-0.035px;">1.8.1</span>
<span id="t122" class="x c" style="left:60.6px;top:316.47px;letter-spacing:0.015px;">1/03/002/0</span>
<span id="t123" class="x c" style="left:103px;top:316.47px;letter-spacing:-0.052px;">Balisage sans nécessite d'alternat</span>
<span id="t124" class="x c" style="right:282.10px;top:316.47px;letter-spacing:0.000px;">8</span>
<span id="t125" class="x c" style="right:245.80px;top:316.47px;letter-spacing:0.000px;">50,00</span>
<span id="t126" class="x c" style="right:203.20px;top:316.47px;letter-spacing:0.000px;">400,00</span>
<span id="t127" class="x c" style="right:160.40px;top:316.47px;letter-spacing:0.000px;">0,00</span>
<span id="t128" class="x c" style="right:127.40px;top:316.47px;letter-spacing:0.000px;">0,00</span>
<span id="t129" class="x c" style="right:85.30px;top:316.47px;letter-spacing:0.000px;">400,00</span>
<span id="t130" class="x c" style="right:30.60px;top:316.47px;letter-spacing:0.000px;">400,00</span>
<div class="a" style="left:10.2px;top:327.10px;width:11.00px;height:10.33px;background:#f3f3f3"></div>
<div class="a" style="left:22.5px;top:327.10px;width:34.90px;height:10.33px;background:#f3f3f3"></div>
<div class="a" style="left:58.9px;top:327.10px;width:37.80px;height:10.33px;background:#f3f3f3"></div>
<div class="a" style="left:98.2px;top:327.10px;width:225.00px;height:10.33px;background:#f3f3f3"></div>
<div class="a" style="left:324.8px;top:327.10px;width:35.10px;height:10.33px;background:#f3f3f3"></div>
<div class="a" style="left:361.4px;top:327.10px;width:34.80px;height:10.33px;background:#f3f3f3"></div>
<div class="a" style="left:397.7px;top:327.10px;width:41.10px;height:10.33px;background:#f3f3f3"></div>
<div class="a" style="left:440.3px;top:327.10px;width:41.30px;height:10.33px;background:#f3f3f3"></div>
<div class="a" style="left:483.3px;top:327.10px;width:31.30px;height:10.33px;background:#f3f3f3"></div>
<div class="a" style="left:516.1px;top:327.10px;width:40.60px;height:10.33px;background:#f3f3f3"></div>
<div class="a" style="left:558.2px;top:327.10px;width:53.20px;height:10.33px;background:#f3f3f3"></div>
<svg class="a" style="left:11.1px;top:328.60px" width="9.1" height="4.8" viewBox="0 0 9 4.8"><path d="M0,2.5C1.3,0.7 2.9,0 4.5,0C6.1,0 7.7,0.7 9,2.5C7.7,4.1 6.1,4.8 4.5,4.8C2.9,4.8 1.3,4.1 0,2.5Z" fill="#232833"/><path d="M1.3,2.9C1.7,3.5 2.3,3.9 3,4.1C2.6,3.6 2.5,3 2.6,2.4ZM7.7,2.9C7.3,3.5 6.7,3.9 6,4.1C6.4,3.6 6.5,3 6.4,2.4Z" fill="#e8e8ec"/><path d="M3.4,2.2C3.9,1.5 5.1,1.5 5.6,2.2" stroke="#5a8ed0" stroke-width="0.7" fill="none"/></svg>
<span id="t131" class="x c" style="left:24.3px;top:327.40px;letter-spacing:-0.035px;">1.8.2</span>
<span id="t132" class="x c" style="left:60.6px;top:327.40px;letter-spacing:0.015px;">1/03/003/0</span>
<span id="t133" class="x c" style="left:103px;top:327.40px;letter-spacing:-0.016px;">Balisage avec nécessité d'alternat avec feux tricolores ou personnels</span>
<span id="t134" class="x c" style="right:282.10px;top:327.40px;letter-spacing:0.000px;">3</span>
<span id="t135" class="x c" style="right:245.80px;top:327.40px;letter-spacing:0.000px;">690,00</span>
<span id="t136" class="x c" style="right:203.20px;top:327.40px;letter-spacing:0.000px;">2 070,00</span>
<span id="t137" class="x c" style="right:160.40px;top:327.40px;letter-spacing:0.000px;">0,00</span>
<span id="t138" class="x c" style="right:127.40px;top:327.40px;letter-spacing:0.000px;">0,00</span>
<span id="t139" class="x c" style="right:85.30px;top:327.40px;letter-spacing:0.000px;">2 070,00</span>
<span id="t140" class="x c" style="right:30.60px;top:327.40px;letter-spacing:0.000px;">2 070,00</span>
<svg class="a" style="left:11.1px;top:339.53px" width="9.1" height="4.8" viewBox="0 0 9 4.8"><path d="M0,2.5C1.3,0.7 2.9,0 4.5,0C6.1,0 7.7,0.7 9,2.5C7.7,4.1 6.1,4.8 4.5,4.8C2.9,4.8 1.3,4.1 0,2.5Z" fill="#232833"/><path d="M1.3,2.9C1.7,3.5 2.3,3.9 3,4.1C2.6,3.6 2.5,3 2.6,2.4ZM7.7,2.9C7.3,3.5 6.7,3.9 6,4.1C6.4,3.6 6.5,3 6.4,2.4Z" fill="#e8e8ec"/><path d="M3.4,2.2C3.9,1.5 5.1,1.5 5.6,2.2" stroke="#5a8ed0" stroke-width="0.7" fill="none"/></svg>
<span id="t141" class="x c" style="left:24.3px;top:338.33px;letter-spacing:-0.034px;">4</span>
<span id="t142" class="x c" style="left:60.6px;top:338.33px;letter-spacing:0.015px;">2/01/001/0</span>
<span id="t143" class="x cb" style="left:100px;top:338.33px;letter-spacing:0.000px;">Prix Généraux</span>
<div class="a" style="left:10.2px;top:348.96px;width:11.00px;height:10.33px;background:#f3f3f3"></div>
<div class="a" style="left:22.5px;top:348.96px;width:34.90px;height:10.33px;background:#f3f3f3"></div>
<div class="a" style="left:58.9px;top:348.96px;width:37.80px;height:10.33px;background:#f3f3f3"></div>
<div class="a" style="left:98.2px;top:348.96px;width:225.00px;height:10.33px;background:#f3f3f3"></div>
<div class="a" style="left:324.8px;top:348.96px;width:35.10px;height:10.33px;background:#f3f3f3"></div>
<div class="a" style="left:361.4px;top:348.96px;width:34.80px;height:10.33px;background:#f3f3f3"></div>
<div class="a" style="left:397.7px;top:348.96px;width:41.10px;height:10.33px;background:#f3f3f3"></div>
<div class="a" style="left:440.3px;top:348.96px;width:41.30px;height:10.33px;background:#f3f3f3"></div>
<div class="a" style="left:483.3px;top:348.96px;width:31.30px;height:10.33px;background:#f3f3f3"></div>
<div class="a" style="left:516.1px;top:348.96px;width:40.60px;height:10.33px;background:#f3f3f3"></div>
<div class="a" style="left:558.2px;top:348.96px;width:53.20px;height:10.33px;background:#f3f3f3"></div>
<svg class="a" style="left:11.1px;top:350.46px" width="9.1" height="4.8" viewBox="0 0 9 4.8"><path d="M0,2.5C1.3,0.7 2.9,0 4.5,0C6.1,0 7.7,0.7 9,2.5C7.7,4.1 6.1,4.8 4.5,4.8C2.9,4.8 1.3,4.1 0,2.5Z" fill="#232833"/><path d="M1.3,2.9C1.7,3.5 2.3,3.9 3,4.1C2.6,3.6 2.5,3 2.6,2.4ZM7.7,2.9C7.3,3.5 6.7,3.9 6,4.1C6.4,3.6 6.5,3 6.4,2.4Z" fill="#e8e8ec"/><path d="M3.4,2.2C3.9,1.5 5.1,1.5 5.6,2.2" stroke="#5a8ed0" stroke-width="0.7" fill="none"/></svg>
<span id="t144" class="x c" style="left:24.3px;top:349.26px;letter-spacing:-0.199px;">4.1</span>
<span id="t145" class="x c" style="left:60.6px;top:349.26px;letter-spacing:0.015px;">2/01/002/0</span>
<span id="t146" class="x cb" style="left:101.8px;top:349.26px;letter-spacing:0.018px;">Réunions</span>
<svg class="a" style="left:11.1px;top:361.39px" width="9.1" height="4.8" viewBox="0 0 9 4.8"><path d="M0,2.5C1.3,0.7 2.9,0 4.5,0C6.1,0 7.7,0.7 9,2.5C7.7,4.1 6.1,4.8 4.5,4.8C2.9,4.8 1.3,4.1 0,2.5Z" fill="#232833"/><path d="M1.3,2.9C1.7,3.5 2.3,3.9 3,4.1C2.6,3.6 2.5,3 2.6,2.4ZM7.7,2.9C7.3,3.5 6.7,3.9 6,4.1C6.4,3.6 6.5,3 6.4,2.4Z" fill="#e8e8ec"/><path d="M3.4,2.2C3.9,1.5 5.1,1.5 5.6,2.2" stroke="#5a8ed0" stroke-width="0.7" fill="none"/></svg>
<span id="t147" class="x c" style="left:24.3px;top:360.19px;letter-spacing:-0.035px;">4.1.1</span>
<span id="t148" class="x c" style="left:60.6px;top:360.19px;letter-spacing:0.015px;">2/01/003/0</span>
<span id="t149" class="x c" style="left:103px;top:360.19px;letter-spacing:-0.065px;">Participation d'un ingénieur hautement qualifié</span>
<span id="t150" class="x c" style="right:282.10px;top:360.19px;letter-spacing:0.000px;">2</span>
<span id="t151" class="x c" style="right:245.80px;top:360.19px;letter-spacing:0.000px;">340,00</span>
<span id="t152" class="x c" style="right:203.20px;top:360.19px;letter-spacing:0.000px;">680,00</span>
<span id="t153" class="x c" style="right:160.40px;top:360.19px;letter-spacing:0.000px;">0,00</span>
<span id="t154" class="x c" style="right:127.40px;top:360.19px;letter-spacing:0.000px;">0,00</span>
<span id="t155" class="x c" style="right:85.30px;top:360.19px;letter-spacing:0.000px;">612,00</span>
<span id="t156" class="x c" style="right:30.60px;top:360.19px;letter-spacing:0.000px;">612,00</span>
<div class="a" style="left:10.2px;top:370.82px;width:11.00px;height:10.33px;background:#f3f3f3"></div>
<div class="a" style="left:22.5px;top:370.82px;width:34.90px;height:10.33px;background:#f3f3f3"></div>
<div class="a" style="left:58.9px;top:370.82px;width:37.80px;height:10.33px;background:#f3f3f3"></div>
<div class="a" style="left:98.2px;top:370.82px;width:225.00px;height:10.33px;background:#f3f3f3"></div>
<div class="a" style="left:324.8px;top:370.82px;width:35.10px;height:10.33px;background:#f3f3f3"></div>
<div class="a" style="left:361.4px;top:370.82px;width:34.80px;height:10.33px;background:#f3f3f3"></div>
<div class="a" style="left:397.7px;top:370.82px;width:41.10px;height:10.33px;background:#f3f3f3"></div>
<div class="a" style="left:440.3px;top:370.82px;width:41.30px;height:10.33px;background:#f3f3f3"></div>
<div class="a" style="left:483.3px;top:370.82px;width:31.30px;height:10.33px;background:#f3f3f3"></div>
<div class="a" style="left:516.1px;top:370.82px;width:40.60px;height:10.33px;background:#f3f3f3"></div>
<div class="a" style="left:558.2px;top:370.82px;width:53.20px;height:10.33px;background:#f3f3f3"></div>
<svg class="a" style="left:11.1px;top:372.32px" width="9.1" height="4.8" viewBox="0 0 9 4.8"><path d="M0,2.5C1.3,0.7 2.9,0 4.5,0C6.1,0 7.7,0.7 9,2.5C7.7,4.1 6.1,4.8 4.5,4.8C2.9,4.8 1.3,4.1 0,2.5Z" fill="#232833"/><path d="M1.3,2.9C1.7,3.5 2.3,3.9 3,4.1C2.6,3.6 2.5,3 2.6,2.4ZM7.7,2.9C7.3,3.5 6.7,3.9 6,4.1C6.4,3.6 6.5,3 6.4,2.4Z" fill="#e8e8ec"/><path d="M3.4,2.2C3.9,1.5 5.1,1.5 5.6,2.2" stroke="#5a8ed0" stroke-width="0.7" fill="none"/></svg>
<span id="t157" class="x c" style="left:24.3px;top:371.12px;letter-spacing:-0.199px;">4.2</span>
<span id="t158" class="x c" style="left:60.6px;top:371.12px;letter-spacing:0.015px;">2/02/001/0</span>
<span id="t159" class="x cb" style="left:101.8px;top:371.12px;letter-spacing:0.042px;">Prix à la vacation</span>
<div class="a" style="left:613.3px;top:217.8px;width:8.7px;height:162.8px;background:#eeeeee"></div>
<div class="a" style="left:613.4px;top:218.2px;width:8.7px;height:8.5px;background:#2f4060;border-radius:1.3px"></div>
<div class="a" style="left:613.4px;top:228.7px;width:8.7px;height:114.8px;background:#2f4060;border-radius:1.3px"></div>
<div class="a" style="left:613.4px;top:371.3px;width:8.7px;height:8.5px;background:#2f4060;border-radius:1.3px"></div>
<svg class="a" style="left:615.5px;top:220.8px" width="4.4" height="2.8" viewBox="0 0 4.6 3"><path d="M0.4,2.5L2.3,0.7L4.2,2.5" stroke="#fff" stroke-width="0.8" fill="none"/></svg>
<svg class="a" style="left:615.5px;top:374.3px" width="4.4" height="2.8" viewBox="0 0 4.6 3"><path d="M0.4,0.5L2.3,2.3L4.2,0.5" stroke="#fff" stroke-width="0.8" fill="none"/></svg>
<svg class="a" style="left:615.4px;top:283.5px" width="4.6" height="5" viewBox="0 0 4.6 5"><path d="M0.4,0.7H4.2M0.4,2.5H4.2M0.4,4.3H4.2" stroke="#dfe3ea" stroke-width="0.7"/></svg>
<span id="t160" class="x tt" style="left:9.5px;top:389.20px;letter-spacing:0.153px;">Total du document</span>
<div class="a" style="left:87px;top:393.9px;width:175.3px;height:0.9px;background:#6685ad"></div>
<div class="box" style="left:79.2px;top:406.00px;width:65.7px;height:10.6px;background:#e5e5e5;border:1px solid #dedede"></div>
<span id="t161" class="x tl" style="left:10.5px;top:405.30px;letter-spacing:0.068px;">Total Net</span>
<span id="t162" class="x tv" style="right:495.88px;top:405.30px;letter-spacing:0.023px;">46 177,00</span>
<span id="t163" class="x tl" style="left:150.8px;top:405.30px;letter-spacing:0.239px;color:#555;font-weight:bold;font-size:6.4px">EUR</span>
<div class="box" style="left:79.2px;top:423.10px;width:65.7px;height:10.6px;background:#e5e5e5;border:1px solid #dedede"></div>
<span id="t164" class="x tl" style="left:10.5px;top:422.40px;letter-spacing:0.199px;">Total TVA (estimé)</span>
<span id="t165" class="x tv" style="right:495.90px;top:422.40px;letter-spacing:0.000px;">9 235,40</span>
<span id="t166" class="x tl" style="left:150.8px;top:422.40px;letter-spacing:0.239px;color:#555;font-weight:bold;font-size:6.4px">EUR</span>
<div class="box" style="left:79.2px;top:440.20px;width:65.7px;height:10.6px;background:#e5e5e5;border:1px solid #dedede"></div>
<span id="t167" class="x tl" style="left:10.5px;top:439.50px;letter-spacing:0.226px;">Total TTC (estimé)</span>
<span id="t168" class="x tv" style="right:495.88px;top:439.50px;letter-spacing:0.023px;">55 412,40</span>
<span id="t169" class="x tl" style="left:150.8px;top:439.50px;letter-spacing:0.239px;color:#555;font-weight:bold;font-size:6.4px">EUR</span>
<svg class="a" style="left:627px;top:448px" width="8" height="8" viewBox="0 0 8 8"><path d="M7.5,0.5V7.5H0.5Z" fill="#9a9a9a"/></svg>
<svg class="a" style="left:4.7px;top:13.7px" width="8.6" height="12.6" viewBox="0 0 9 13"><path d="M0.6,0.8V10L2.8,8L4.3,11.5L5.8,10.9L4.3,7.6H7.2Z" fill="#fff" stroke="#222" stroke-width="0.8"/></svg>
<svg class="a" style="left:7px;top:105px" width="15" height="19" viewBox="7 105 15 19"><path d="M9.2,111.4H17.6M13.4,107.2V115.8" stroke="#444" stroke-width="0.6" fill="none"/><path d="M13.4,106.4L14.6,108H12.2ZM8.4,111.4L10,110.2V112.6ZM18.4,111.4L16.8,110.2V112.6ZM13.4,116.4L12.2,114.8H14.6Z" fill="#1a1a1a"/><path d="M13.9,111.6V119.6L15.7,118L17.1,121.3L18.5,120.7L17.1,117.5H19.6Z" fill="#fff" stroke="#222" stroke-width="0.7"/></svg>
<div class="a" style="left:0;top:88px;width:1.3px;height:22.2px;background:#2a3550"></div>
<div class="a" style="left:637px;top:90px;width:1px;height:21px;background:#2a3550"></div>
<div class="a" style="left:637px;top:167px;width:1px;height:10px;background:#6a7080"></div>
</div></body></html>
